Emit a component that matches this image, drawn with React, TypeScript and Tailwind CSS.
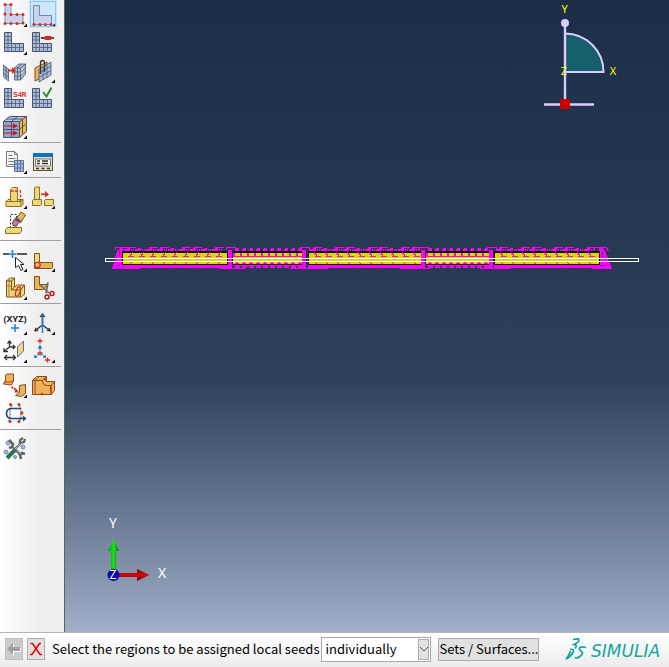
import type { ReactNode } from "react";

type Tool = { label: string; art: ReactNode; menu?: boolean; active?: boolean };

const RED = "#d92b1c";
const BLUE = "#a9bbdd";
const GRID = "#4a5468";
const SAND = "#f0d878";
const SANDLINE = "#8a6f24";
const TAN = "#eeb25a";
const TANLINE = "#7a5418";

function Dots({ at, r = 1.5 }: { at: number[][]; r?: number }) {
  return (
    <>
      {at.map(([x, y]) => (
        <circle key={`${x}-${y}`} cx={x} cy={y} r={r} fill={RED} />
      ))}
    </>
  );
}

function MeshL() {
  return (
    <>
      <path d="M3.5 4.5h7v11h12v8h-19z" fill={BLUE} stroke={GRID} />
      <path d="M7 4.500v19M3.500 8.500h7M3.500 12h7M3.500 15.500h7M3.500 19.500h19M10.500 15.500v8M14.500 15.500v8M18.500 15.500v8" stroke={GRID} fill="none" strokeWidth=".75" />
    </>
  );
}

function SandBase({ y = 18 }: { y?: number }) {
  return (
    <path d={`M5 ${y + 1.5}l2-2h15v5l-2 2h-15zM5 ${y + 1.5}h15v5M20 ${y + 1.5}l2-2`} fill={SAND} stroke={SANDLINE} />
  );
}

const groups: Tool[][] = [
  [
    {
      label: "Seed part", menu: true,
      art: (
        <>
          <path d="M4 4.500h6v10h12v9h-18z" fill="#c8d4ee" stroke="#8794ae" />
          <Dots at={[[4, 4.500], [10, 4.500], [4, 14], [10, 14.500], [16, 14.500], [22, 14.500], [22, 23], [16, 23.500], [10, 23.500], [4, 23.500]]} />
        </>
      ),
    },
    {
      label: "Seed edges", menu: true, active: true,
      art: (
        <>
          <path d="M4.500 5.500h6v10h12v9h-18z" fill="#c8d4ee" stroke="#7886a2" />
          <Dots at={[[5, 24.500], [11, 24.500], [16.500, 24.500], [22, 24.500]]} />
        </>
      ),
    },
    { label: "Mesh part", menu: true, art: <MeshL /> },
    {
      label: "Delete mesh",
      art: (
        <>
          <MeshL />
          <path d="M12 10h13" stroke="#111" strokeWidth="1.500" />
          <rect x="15.500" y="8" width="7" height="4" rx="1" fill={RED} />
        </>
      ),
    },
    {
      label: "Bottom-up mesh",
      art: (
        <>
          <path d="M2.500 9l5 4v12l-5-4zM2.500 13l5 4M2.500 17l5 4M5 11v12" fill={BLUE} stroke={GRID} strokeWidth=".8" />
          <path d="M13.500 12l4-4h7v10l-5 6h-6zM13.500 12h6v12M19.500 12l5-4M13.500 16h6l5-4M13.500 20h6l5-5M16.500 12v12M16.500 12l4-4" fill={BLUE} stroke={GRID} strokeWidth=".8" />
          <path d="M7 13.500h4v-2.500l4 3.500-4 3.500v-2.500h-4z" fill={RED} />
        </>
      ),
    },
    {
      label: "Associate mesh", menu: true,
      art: (
        <>
          <path d="M6 12l12-6v13l-12 6z" fill={TAN} stroke={TANLINE} />
          <path d="M10 13l12-7v13l-12 7zM10 17l12-7M10 21.500l12-7M14 11v13M18 8.500v13" fill={BLUE} stroke={GRID} strokeWidth=".8" />
          <path d="M11.500 18v-11q0-2.500 2-2.500t2 2.500v9" stroke="#333" strokeWidth="1.300" fill="none" />
        </>
      ),
    },
    {
      label: "Element type S4R",
      art: (
        <>
          <MeshL />
          <text x="12" y="13" fontSize="7" fontWeight="700" fill={RED} fontFamily="Liberation Sans, sans-serif">S4R</text>
        </>
      ),
    },
    {
      label: "Verify mesh",
      art: (
        <>
          <MeshL />
          <path d="M14 8l3.500 4.500 5-9" stroke="#2c8a2c" strokeWidth="1.800" fill="none" />
        </>
      ),
    },
    {
      label: "Stack direction", menu: true,
      art: (
        <>
          <path d="M2.500 9.500l6-5h17l-6 5z" fill="#b9c8e6" stroke={GRID} />
          <path d="M2.500 9.500h16v16h-16z" fill="#8fa5d0" stroke={GRID} />
          <path d="M18.500 9.500l7-5v15l-7 6z" fill="#f3b63e" stroke={GRID} />
          <path d="M5.500 7h16v15M10.500 25v-15.500l6-5M2.500 17.500h16l6-5.500" stroke={GRID} fill="none" />
          <path d="M3 13.500h9v-2l5 2.500-5 2.500v-2h-9zM3 20.500h9v-2l5 2.500-5 2.500v-2h-9z" fill="#c3131b" />
        </>
      ),
    },
  ],
  [
    {
      label: "Create mesh set", menu: true,
      art: (
        <>
          <path d="M5.500 4.500h8l3 3v12h-11zM13.500 4.500v3h3M7.500 8.500h4M7.500 11.500h7M7.500 14.500h7M7.500 17.500h7" fill="#f7f7f7" stroke="#777" />
          <path d="M13.500 13.500h9v11h-9zM13.500 17h9M13.500 21h9M16.500 13.500v11M19.500 13.500v11" fill={BLUE} stroke="#5b6f9d" />
        </>
      ),
    },
    {
      label: "Mesh manager",
      art: (
        <>
          <rect x="4.500" y="6.500" width="19" height="17" fill="#e8dfbe" stroke="#55523d" />
          <rect x="4" y="6" width="20" height="4" fill="#0a72c7" />
          <rect x="6.500" y="12" width="15" height="7" fill="#fff" stroke="#777" />
          <path d="M8 14h3M13 14h6M8 16.500h3M13 16.500h6M7 21.500h3M12.500 21.500h3M18 21.500h3" stroke="#333" strokeWidth="1.300" />
        </>
      ),
    },
  ],
  [
    {
      label: "Extend feature", menu: true,
      art: (
        <>
          <SandBase y={18} />
          <path d="M9.500 19.500v-12l2-2h5v14z" fill={SAND} stroke={SANDLINE} />
          <path d="M9.500 9h10v10" stroke={RED} strokeWidth="1.300" strokeDasharray="3 1.500" fill="none" />
        </>
      ),
    },
    {
      label: "Move feature", menu: true,
      art: (
        <>
          <path d="M5.500 18v-12l1-1h4v13z" fill={SAND} stroke={SANDLINE} />
          <path d="M3.500 18.500l1-1h8v5l-1 1h-8zM15.500 18.500l1-1h8v5l-1 1h-8z" fill={SAND} stroke={SANDLINE} />
          <path d="M12 11.500h4v-2.500l4 3.500-4 3v-2.500h-4z" fill={RED} />
        </>
      ),
    },
    {
      label: "Erase feature",
      art: (
        <>
          <path d="M9.500 18v-13.500h6v13" fill="none" stroke="#333" strokeDasharray="2 1.500" />
          <path d="M4.500 19.500l2-2h14v4l-2 2h-14z" fill={SAND} stroke={SANDLINE} />
          <path d="M15 9l5-7 4.500 3-5 8z" fill={TAN} stroke={TANLINE} />
          <path d="M11.500 13l2-4 4.500 3-2.500 4h-3z" fill="#d77c85" stroke="#653b47" />
          <path d="M14.500 7.500l5 4" stroke="#4a5a80" strokeWidth="2" />
        </>
      ),
    },
  ],
  [
    {
      label: "Select point", menu: true,
      art: (
        <>
          <path d="M2 9h6M16 9h10" stroke="#222" strokeWidth="1.500" />
          <path d="M7.500 9h8M11.500 5v8" stroke="#1e7fe0" strokeWidth="1.600" />
          <path d="M14.500 12.500v10l3-2 2.500 5 2-1-2.500-5h3.500z" fill="#fff" stroke="#222" />
        </>
      ),
    },
    {
      label: "Partition corner", menu: true,
      art: (
        <>
          <path d="M5.500 23.500v-15h5v9h13v5l-1 1z" fill={TAN} stroke={TANLINE} />
          <path d="M6 23v-14h4v9z" fill={SAND} />
          <circle cx="8.500" cy="20" r="2.700" fill="none" stroke={RED} strokeWidth="1.300" />
        </>
      ),
    },
    {
      label: "Partition cell", menu: true,
      art: (
        <>
          <path d="M5.500 8l3-3h5v9l3-2h7v9l-3 3h-15z" fill={SAND} stroke={TANLINE} />
          <path d="M5.500 8h5v9h9v7M10.500 8l3-3M10.500 17l3-3M19.500 17l4-5" fill="none" stroke={TANLINE} />
          <path d="M8 6v17M5.500 13h5" fill="none" stroke={TANLINE} strokeWidth=".6" />
          <ellipse cx="17" cy="18.500" rx="2" ry="5" transform="rotate(20 17 18.500)" fill="none" stroke={RED} strokeWidth="1.300" />
        </>
      ),
    },
    {
      label: "Cut geometry",
      art: (
        <>
          <path d="M5.500 3.500h5v8h8l-4 5h-9z" fill={TAN} stroke={TANLINE} />
          <path d="M10 11l10 9M19 9.500l-2 11" stroke="#666" strokeWidth="1.600" />
          <circle cx="23" cy="20.500" r="2" fill="none" stroke="#b01818" strokeWidth="1.400" />
          <circle cx="18" cy="24" r="2" fill="none" stroke="#b01818" strokeWidth="1.400" />
        </>
      ),
    },
  ],
  [
    {
      label: "Datum point", menu: true,
      art: (
        <>
          <text x="14" y="14" textAnchor="middle" fontSize="9" fontWeight="700" fill="#222" fontFamily="Noto Sans, sans-serif">(XYZ)</text>
          <path d="M10 20h8M14 16v8" stroke="#1e7fe0" strokeWidth="1.500" />
        </>
      ),
    },
    {
      label: "Datum axis", menu: true,
      art: (
        <>
          <path d="M13.500 17v-11M13.500 17l-6 4.500M13.500 17l6 4.500" stroke="#333" strokeWidth="1.500" />
          <path d="M10.500 9l3-4 3 4zM5 23.500l1.500-4 3 3.500zM22 23.500l-1.500-4-3 3.500z" fill="#333" />
          <path d="M13.500 5v20" stroke="#1e7fe0" strokeWidth="1.500" />
        </>
      ),
    },
    {
      label: "Datum plane", menu: true,
      art: (
        <>
          <path d="M8.500 5v6l-5 4M8.500 11h5M6.500 7.500l2-2.500 2 2.500M12 9l2 2-2 2M3 12v3.500h4M4 21.500h10M6 19l-2.500 2.500 2.500 2.500M12 19l2.500 2.500-2.500 2.500" fill="none" stroke="#333" strokeWidth="1.300" />
          <path d="M16.500 11l6-6v10l-6 6z" fill="#f6d381" stroke="#5b6f9d" />
        </>
      ),
    },
    {
      label: "Datum system", menu: true,
      art: (
        <>
          <path d="M8.500 5h5M11 2.500v5M8.500 17h5M11 14.500v5M16 24h5M18.500 21.500v5" stroke={RED} strokeWidth="1.300" />
          <path d="M11 9v5M10 18l-4 3M12 18l4 3" stroke="#1e7fe0" strokeWidth="1.300" strokeDasharray="2 1" />
          <path d="M8.500 12.500l2.500-3 2.500 3zM5 22l.5-3.500 3 3zM17 22l-.5-3.500-3 3z" fill="#1673d1" />
        </>
      ),
    },
  ],
  [
    {
      label: "Virtual topology", menu: true,
      art: (
        <>
          <path d="M2.500 13l2-4v-5l2-1h6v7l-2 4z" fill={TAN} stroke={TANLINE} />
          <path d="M14.500 24.500l4-3v-7l6-1v9l-4 3z" fill={TAN} stroke={TANLINE} />
          <path d="M10.500 16l5 3" stroke={RED} strokeWidth="2" strokeDasharray="2 1" />
          <path d="M13.500 21.500l1.500-4 3 4z" fill={RED} />
          <path d="M4 11h6l2-2" stroke={RED} />
        </>
      ),
    },
    {
      label: "Ignore entities",
      art: (
        <>
          <path d="M3.500 9.500l4-4h10v5h8v9l-3 4h-19z" fill={TAN} stroke={TANLINE} />
          <path d="M3.500 9.500h10q0 5 5 5h3.500v9M13.500 9.500l4-4M22 14.500l3.500-4" fill="none" stroke={TANLINE} />
          <path d="M6 10v13M22 14v9M6 9.500l3-3" stroke={RED} />
          <Dots at={[[16.500, 8.500], [22, 18], [13, 23]]} r={1.2} />
        </>
      ),
    },
    {
      label: "Restore edges",
      art: (
        <>
          <path d="M20 9.500h-9q-5.500 0-5.500 5t5.500 5h13" fill="none" stroke="#174a8a" strokeWidth="1.600" />
          <path d="M11 6l-2 4v8l-1 4M18 6l2 4v8l-2 5" stroke="#333" strokeDasharray="2 1" />
          <path d="M22 16.500l3.500 3-3.500 3z" fill="#174a8a" />
          <Dots at={[[9.500, 5.500], [18, 5.500], [21, 14], [9, 22.500], [18, 22.500]]} />
        </>
      ),
    },
  ],
  [
    {
      label: "Customize tools",
      art: (
        <>
          <circle cx="7" cy="9" r="2" fill="#aab7d8" stroke="#7a88ad" />
          <circle cx="22" cy="13" r="2" fill="#aab7d8" stroke="#7a88ad" />
          <circle cx="5" cy="18" r="2" fill="#aab7d8" stroke="#7a88ad" />
          <circle cx="14" cy="23" r="1.500" fill="#aab7d8" stroke="#7a88ad" />
          <path d="M6 24l8-8" stroke="#27734f" strokeWidth="4" />
          <path d="M8 6l4 4-1 3-3 1M11 12l9 9M24 20l-3-1-2 2 1 4" stroke="#5d6367" strokeWidth="2.600" fill="none" />
          <path d="M14 15l5-5v-4l3-2M19 9l4-1 1-3" stroke="#5d6367" strokeWidth="2.200" fill="none" />
          <path d="M12 12l8 8M15 14l4-4" stroke="#b9bfc1" strokeWidth="1" />
        </>
      ),
    },
  ],
];

function ToolButton({ tool }: { tool: Tool }) {
  return (
    <button
      type="button"
      aria-label={tool.label}
      className={`h-7 w-7 p-0 ${tool.active ? "bg-[#cce6fa] outline outline-offset-[-2px] outline-[#8cc5f0]" : ""}`}
    >
      <svg viewBox="0 0 28 28" className="size-7" aria-hidden="true" fill="none">
        {tool.art}
        {tool.menu && <path d="M26 23.500v3.500h-3.500z" fill="#000" />}
      </svg>
    </button>
  );
}

const range = (from: number, to: number, step: number) => {
  const out: number[] = [];
  for (let n = from; n < to; n += step) out.push(n);
  return out;
};

const M = "#ff00ff";

function OpenBay({ from, to, flip }: { from: number; to: number; flip?: boolean }) {
  return (
    <>
      <rect x={from} y="11" width={to - from} height="14" fill="#151515" />
      <rect x={from + 1} y="13" width={to - from - 2} height="11" fill="#d9d900" />
      {range(from + 6, to - 6, 11).map((x) => (
        <g key={x} stroke={M} strokeWidth="1">
          <path d={flip ? `M${x} 12l3 4M${x + 1} 16.500h6` : `M${x + 5} 12l-3 4M${x} 16.500h6`} />
          <path d={flip ? `M${x} 21l3 3` : `M${x + 5} 21l-3 3`} />
        </g>
      ))}
      {range(from + 2, to - 8, 11).map((x, i) => (
        <g key={x}>
          <path d={`M${x} 11v-2h3v-1h3v3z`} fill={M} />
          <path d={`M${x + 7} 11v-2M${x + 9} 11v-2`} stroke={M} />
          {i % 3 !== 1 && <path d={`M${x + 3} 7.500h9`} stroke={M} />}
        </g>
      ))}
      <path d={`M${from} 26.500h${to - from}`} stroke={M} strokeWidth="3" />
      <path d={`M${from + 4} 28h${to - from - 8}`} stroke="#6d276e" strokeDasharray="5 8 3 6" />
    </>
  );
}

function DenseBay({ from, to }: { from: number; to: number }) {
  return (
    <>
      <rect x={from} y="11" width={to - from} height="14" fill="#151515" />
      <rect x={from} y="13" width={to - from} height="11" fill="#d9d900" />
      <path d={`M${from} 14.500h${to - from}`} stroke={M} strokeWidth="3" strokeDasharray="2 5" />
      <path d={`M${from} 16.500h${to - from}`} stroke={M} strokeWidth="1" />
      {range(from + 2, to - 3, 7).map((x) => (
        <g key={x} fill={M}>
          <path d={`M${x} 11v-2l1-1h2l1 1v2z`} />
          <path d={`M${x} 24l2-3 2 3z`} />
          <path d={`M${x} 26h5v2h-5z`} />
        </g>
      ))}
      <path d={`M${from} 25.500h${to - from}`} stroke={M} />
    </>
  );
}

function Model() {
  return (
    <svg viewBox="100 0 544 34" width="544" height="34" fill="none" shapeRendering="crispEdges" role="img" aria-label="Meshed assembly">
      <path d="M112 29l5-18 3-3h3v21z" fill={M} />
      <path d="M612 29l-7-18-3-3h-3v21z" fill={M} />
      <path d="M115.500 10v-2.500h12v3M594.500 10v-2.500h12l2 4" stroke={M} />
      <path d="M119.500 11v5M116.500 17v3M117 25.500h3M602.500 11v6M605.500 17v3M600 25.500h5" stroke="#6d276e" />
      <OpenBay from={122} to={228} />
      <DenseBay from={233} to={302} />
      <OpenBay from={308} to={422} flip />
      <DenseBay from={426} to={489} />
      <OpenBay from={494} to={600} flip />
      {[230, 304, 423, 491].map((x) => (
        <g key={x}>
          <path d={`M${x - 2} 10h4v18h-4z`} fill={M} />
          <path d={`M${x - 4} 10v-2.500h9v3`} stroke={M} />
          <path d={`M${x + 2.500} 11v13`} stroke="#301030" />
        </g>
      ))}
      <path d="M112 28.500h28M220 28.500h25M290 28.500h38M400 28.500h30M480 28.500h30M592 28.500h20" stroke={M} />
      <rect x="105.500" y="18.500" width="533" height="3" stroke="#fff" />
    </svg>
  );
}

function Compass() {
  return (
    <svg viewBox="540 0 84 114" width="84" height="114" fill="none" role="img" aria-label="View compass">
      <path d="M565 33.500a38.500 38.500 0 0 1 38.500 38.500h-38.500z" fill="#155f6d" stroke="#dccbff" strokeWidth="2" />
      <path d="M565 23v80" stroke="#dccbff" strokeWidth="2.400" />
      <path d="M544 104.500h50" stroke="#dccbff" strokeWidth="2.400" />
      <circle cx="565" cy="23" r="4" fill="#dccbff" />
      <rect x="560" y="99" width="10" height="10" fill="#c80000" />
      <rect x="563" y="102" width="4" height="4" fill="#df0000" />
      <g fill="#ffff00" fontSize="11" fontFamily="Noto Sans, sans-serif" textAnchor="middle">
        <text x="564.500" y="13">Y</text>
        <text x="564" y="75">Z</text>
        <text x="613" y="75">X</text>
      </g>
    </svg>
  );
}

function Triad() {
  return (
    <svg viewBox="100 510 76 78" width="76" height="78" role="img" aria-label="Axis triad">
      <defs>
        <linearGradient id="green"><stop stopColor="#009a08" /><stop offset=".5" stopColor="#19e21c" /><stop offset="1" stopColor="#007c06" /></linearGradient>
        <linearGradient id="red" x2="0" y2="1"><stop stopColor="#8b0000" /><stop offset=".5" stopColor="#d00d0d" /><stop offset="1" stopColor="#740000" /></linearGradient>
      </defs>
      <path d="M111 550h5v22h-5zM108 551l5.500-12 5.500 12z" fill="url(#green)" />
      <path d="M118 573h19v4h-19zM137 569l12.500 6-12.500 6z" fill="url(#red)" />
      <circle cx="113.500" cy="575" r="6" fill="#0808ad" />
      <g fill="#fff" fontSize="14" fontFamily="Noto Sans, sans-serif" textAnchor="middle">
        <text x="113" y="528">Y</text>
        <text x="162" y="578">X</text>
        <text x="113" y="579" fontSize="12">Z</text>
      </g>
    </svg>
  );
}

export default function App() {
  return (
    <div className="flex min-h-screen flex-col overflow-hidden bg-[#f0f0f0] font-['Noto_Sans_CJK_SC','Noto_Sans',sans-serif] text-[13px] text-black">
      <div className="flex grow">
        <aside aria-label="Mesh tools" className="w-[65px] shrink-0 border-r border-[#606060] bg-linear-to-r from-white to-[#efefef] to-60%">
          {groups.map((tools, i) => (
            <div
              key={tools[0].label}
              className={`mr-[3px] flex flex-wrap pb-0.5 pl-px ${i > 0 ? "pt-1" : ""} ${i < groups.length - 1 ? "border-b border-[#a0a0a0]" : ""}`}
            >
              {tools.map((tool) => <ToolButton key={tool.label} tool={tool} />)}
            </div>
          ))}
        </aside>
        <main className="relative grow overflow-hidden bg-linear-to-b from-[#1c2d47] via-[#2e4159] via-60% to-[#a1afc8]">
          <div className="absolute top-60 left-[35px]"><Model /></div>
          <div className="absolute top-0 right-[45px]"><Compass /></div>
          <div className="absolute bottom-11 left-[35px]"><Triad /></div>
        </main>
      </div>
      <footer className="flex h-[35px] shrink-0 items-center overflow-hidden border-t border-[#b4b4b4] bg-linear-to-b from-white to-[#ececec] pb-0.5 pl-[5px] whitespace-nowrap">
        <button type="button" aria-label="Previous step" disabled className="flex h-[22px] w-[18px] items-center justify-center border border-[#bfbfbf] bg-[#cccccc]">
          <svg viewBox="0 0 16 16" className="size-4 shrink-0" aria-hidden="true">
            <path d="M2 9l6-6v4h7v4h-7v4z" fill="#fff" />
            <path d="M1 8l6-6v4h7v4h-7v4z" fill="#a0a0a0" />
          </svg>
        </button>
        <button type="button" aria-label="Cancel procedure" className="ml-1 flex h-[22px] w-[18px] items-center justify-center border border-[#adadad] bg-[#e1e1e1]">
          <svg viewBox="0 0 14 14" className="size-[14px] shrink-0" aria-hidden="true">
            <path d="M1.500 1.500h2l7.500 11h2M12 1.500h-1.500l-7.500 11h-2" stroke="#f00000" strokeWidth="1.500" fill="none" />
          </svg>
        </button>
        <label htmlFor="method" className="ml-[7px]">Select the regions to be assigned local seeds</label>
        <div className="relative ml-0.5">
          <select id="method" className="block h-[25px] w-[110px] appearance-none border border-[#a6a9b0] bg-white pr-5 pl-[3px] leading-5">
            <option>individually</option>
          </select>
          <span className="pointer-events-none absolute top-0.5 right-0.5 flex h-[21px] w-[11px] items-center justify-center border border-[#adadad] bg-[#e1e1e1]">
            <svg viewBox="0 0 10 6" className="h-1.5 w-[10px] shrink-0" aria-hidden="true"><path d="M1 1l4 4 4-4" stroke="#555" fill="none" /></svg>
          </span>
        </div>
        <button type="button" className="ml-[7px] h-[23px] w-[101px] shrink-0 border border-[#adadad] bg-[#e1e1e1] leading-5">Sets / Surfaces...</button>
        <div className="ml-auto flex w-[104px] shrink-0 items-center text-[#12a5a0]">
          <svg viewBox="0 0 22 24" className="h-6 w-[22px] shrink-0" fill="none" stroke="currentColor" strokeWidth="1.700" aria-hidden="true">
            <path d="M8 2.500q6-1.500 6 .5t-5 4.500q4 .5 1 4" />
            <path d="M5 12.500q5-1 3 3t-7 6.500q2-2 4.500-8" />
            <path d="M21 10.500q-6-1.500-6.500.5t2 3.500-1 4.500-5.500 1.500" />
          </svg>
          <span className="ml-1 pt-1 font-['DejaVu_Sans'] text-[17px] leading-5 italic">SIMULIA</span>
        </div>
      </footer>
    </div>
  );
}
